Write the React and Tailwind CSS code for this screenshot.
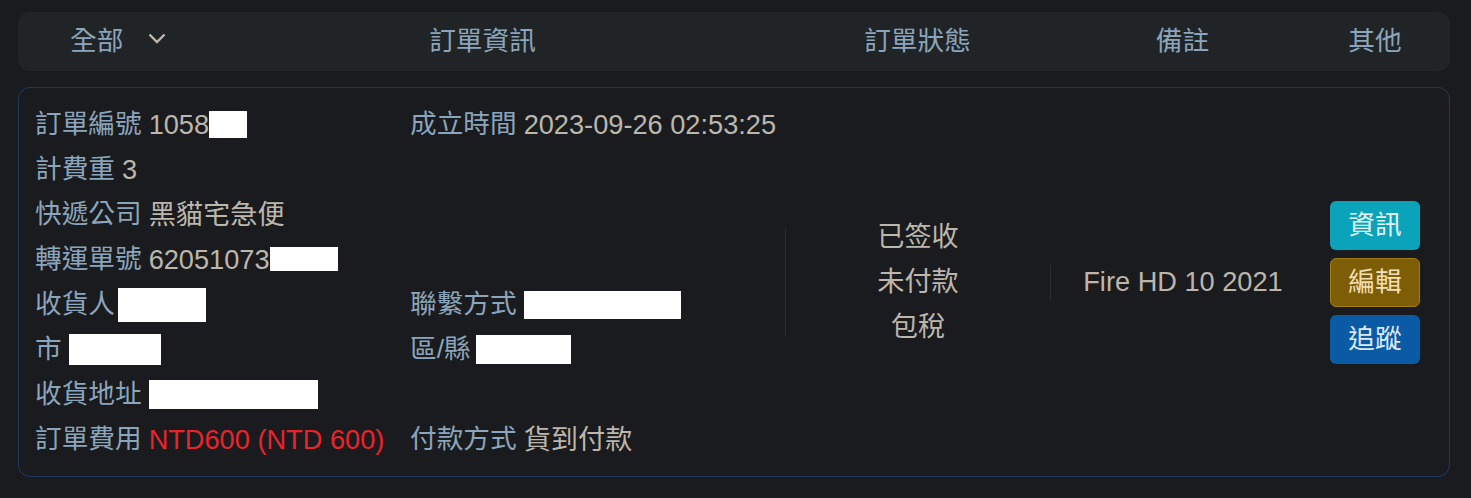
import React from 'react';

const font = { fontFamily: '"Liberation Sans", "Noto Sans CJK TC", sans-serif' };

const Blank = ({ w, h }) => (
  <span className={`inline-block bg-white align-middle ${w} ${h}`} />
);

const Field = ({ label, children, gap = true }) => (
  <div className="flex items-center h-[45px] whitespace-nowrap">
    <span className="text-[#8ba5bc]">{label}</span>
    {gap && <span className="w-[7px]" />}
    <span className="text-[#bcb6ac] text-[27.2px] flex items-center">{children}</span>
  </div>
);

const Empty = () => <div className="h-[45px]" />;

export default function App() {
  return (
    <div
      className="w-[1471px] h-[498px] bg-[#1a1b1e] pt-[12px] px-[18px] text-[26.67px] leading-none"
      style={font}
    >
      {/* header */}
      <div className="h-[59px] w-[1432px] rounded-[12px] bg-[#212426] flex items-center text-[#8ba5bc]">
        <div className="w-[162px] pl-[52px] flex items-center">
          <span>全部</span>
          <svg className="ml-[25px] mt-[-6px]" width="18" height="11" viewBox="0 0 18 11" fill="none">
            <path d="M1.5 1.5 L9 9 L16.5 1.5" stroke="#bdb7ad" strokeWidth="2.4" />
          </svg>
        </div>
        <div className="w-[605px] text-center">訂單資訊</div>
        <div className="w-[265px] text-center">訂單狀態</div>
        <div className="w-[265px] text-center">備註</div>
        <div className="w-[120px] text-center">其他</div>
      </div>

      {/* order card */}
      <div className="mt-[16px] w-[1432px] h-[390px] rounded-[12px] border border-[#1d3a5e] py-[14px] pl-[16px] flex">
        <div className="w-[750px] grid grid-cols-[375px_375px]">
          <Field label="訂單編號">1058<Blank w="w-[38px]" h="h-[27px]" /></Field>
          <Field label="成立時間">2023-09-26 02:53:25</Field>
          <Field label="計費重">3</Field>
          <Empty />
          <Field label="快遞公司">黑貓宅急便</Field>
          <Empty />
          <Field label="轉運單號">62051073<Blank w="w-[68px]" h="h-[24px]" /></Field>
          <Empty />
          <Field label="收貨人" gap={false}><span className="w-[3px]" /><Blank w="w-[88px]" h="h-[34px]" /></Field>
          <Field label="聯繫方式"><Blank w="w-[157px]" h="h-[28px]" /></Field>
          <Field label="市"><Blank w="w-[92px]" h="h-[31px]" /></Field>
          <Field label="區/縣" gap={false}><span className="w-[5px]" /><Blank w="w-[95px]" h="h-[29px]" /></Field>
          <Field label="收貨地址"><Blank w="w-[169px]" h="h-[29px]" /></Field>
          <Empty />
          <Field label="訂單費用"><span className="text-[#e8242b]">NTD600 (NTD 600)</span></Field>
          <Field label="付款方式">貨到付款</Field>
        </div>

        <div className="w-[265px] flex items-center">
          <div className="w-px h-[108px] bg-[#2d2f33]" />
          <div className="flex-1 flex flex-col items-center text-[#bcb6ac] text-[27.2px]">
            <div className="h-[45px] flex items-center">已签收</div>
            <div className="h-[45px] flex items-center">未付款</div>
            <div className="h-[45px] flex items-center">包稅</div>
          </div>
        </div>

        <div className="w-[265px] flex items-center">
          <div className="w-px h-[35px] bg-[#2d2f33]" />
          <div className="flex-1 text-center text-[#bcb6ac] text-[27.2px]">Fire HD 10 2021</div>
        </div>

        <div className="w-[120px] flex flex-col items-center justify-center gap-[8px]">
          <button className="w-[90px] h-[49px] rounded-[6px] bg-[#0ba3b9] text-[#e3f5f8]">資訊</button>
          <button className="w-[90px] h-[49px] rounded-[6px] bg-[#7d5e06] border border-[#a37c12] text-[#f2dfb6]">編輯</button>
          <button className="w-[90px] h-[49px] rounded-[6px] bg-[#0a5aa6] text-[#dfeaf5]">追蹤</button>
        </div>
      </div>
    </div>
  );
}
